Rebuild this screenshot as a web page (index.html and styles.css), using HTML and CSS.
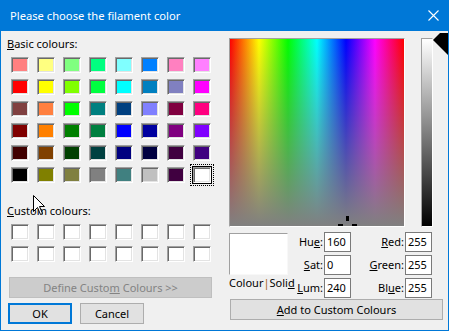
FILE: index.html
```html
<!DOCTYPE html>
<html>
<head>
<meta charset="utf-8">
<link rel="stylesheet" href="styles.css">
</head>
<body>
<div class="window">
  <div class="titlebar">
    <span class="title">Please choose the filament color</span>
    <svg class="close" width="11" height="11" viewBox="0 0 11 11"><path d="M0.5 0.5 L10.5 10.5 M10.5 0.5 L0.5 10.5" stroke="#fff" stroke-width="1.1" fill="none"/></svg>
  </div>
  <div class="client">
    <div class="left">
      <div class="label basic-label"><u>B</u>asic colours:</div>
      <div class="swatches">
        <div class="sw" style="background:#ff8080"></div><div class="sw" style="background:#ffff80"></div><div class="sw" style="background:#80ff80"></div><div class="sw" style="background:#00ff80"></div><div class="sw" style="background:#80ffff"></div><div class="sw" style="background:#0080ff"></div><div class="sw" style="background:#ff80c0"></div><div class="sw" style="background:#ff80ff"></div>
        <div class="sw" style="background:#ff0000"></div><div class="sw" style="background:#ffff00"></div><div class="sw" style="background:#80ff00"></div><div class="sw" style="background:#00ff40"></div><div class="sw" style="background:#00ffff"></div><div class="sw" style="background:#0080c0"></div><div class="sw" style="background:#8080c0"></div><div class="sw" style="background:#ff00ff"></div>
        <div class="sw" style="background:#804040"></div><div class="sw" style="background:#ff8040"></div><div class="sw" style="background:#00ff00"></div><div class="sw" style="background:#008080"></div><div class="sw" style="background:#004080"></div><div class="sw" style="background:#8080ff"></div><div class="sw" style="background:#800040"></div><div class="sw" style="background:#ff0080"></div>
        <div class="sw" style="background:#800000"></div><div class="sw" style="background:#ff8000"></div><div class="sw" style="background:#008000"></div><div class="sw" style="background:#008040"></div><div class="sw" style="background:#0000ff"></div><div class="sw" style="background:#0000a0"></div><div class="sw" style="background:#800080"></div><div class="sw" style="background:#8000ff"></div>
        <div class="sw" style="background:#400000"></div><div class="sw" style="background:#804000"></div><div class="sw" style="background:#004000"></div><div class="sw" style="background:#004040"></div><div class="sw" style="background:#000080"></div><div class="sw" style="background:#000040"></div><div class="sw" style="background:#400040"></div><div class="sw" style="background:#400080"></div>
        <div class="sw" style="background:#000000"></div><div class="sw" style="background:#808000"></div><div class="sw" style="background:#808040"></div><div class="sw" style="background:#808080"></div><div class="sw" style="background:#408080"></div><div class="sw" style="background:#c0c0c0"></div><div class="sw" style="background:#400040"></div><div class="sw selected" style="background:#ffffff"></div>
      </div>
      <div class="label custom-label"><u>C</u>ustom colours:</div>
      <div class="swatches custom">
        <div class="sw"></div><div class="sw"></div><div class="sw"></div><div class="sw"></div><div class="sw"></div><div class="sw"></div><div class="sw"></div><div class="sw"></div>
        <div class="sw"></div><div class="sw"></div><div class="sw"></div><div class="sw"></div><div class="sw"></div><div class="sw"></div><div class="sw"></div><div class="sw"></div>
      </div>
      <div class="btn define"><span>Define Custo<u>m</u> Colours &gt;&gt;</span></div>
      <div class="actions">
        <div class="btn default"><span>OK</span></div>
        <div class="btn"><span>Cancel</span></div>
      </div>
    </div>
    <div class="right">
      <div class="pickers">
        <div class="spectrum">
          <span class="cross cross-top"></span>
          <span class="cross cross-left"></span>
          <span class="cross cross-right"></span>
        </div>
        <div class="lum-wrap">
          <div class="lum"></div>
          <svg class="lum-arrow" width="16" height="24" viewBox="0 0 16 24"><polygon points="0,7 7,0 16,0 16,23" fill="#000"/></svg>
        </div>
      </div>
      <div class="fields">
        <div class="preview"></div>
        <div class="flabel r1"><span>Hu<u>e</u>:</span></div>
        <div class="field r1">160</div>
        <div class="flabel r1"><span><u>R</u>ed:</span></div>
        <div class="field r1">255</div>
        <div class="flabel r2"><span><u>S</u>at:</span></div>
        <div class="field r2">0</div>
        <div class="flabel r2"><span><u>G</u>reen:</span></div>
        <div class="field r2">255</div>
        <div class="solid">Colour<span class="sep">|</span>Soli<u>d</u></div>
        <div class="flabel r3"><span><u>L</u>um:</span></div>
        <div class="field r3">240</div>
        <div class="flabel r3"><span>Bl<u>u</u>e:</span></div>
        <div class="field r3">255</div>
      </div>
      <div class="btn add"><span><u>A</u>dd to Custom Colours</span></div>
    </div>
  </div>
  <svg class="pointer" width="13" height="21" viewBox="0 0 13 21"><path d="M0.5 0.5 L0.5 16.5 L4.5 12.5 L7.5 19.5 L9.5 18.5 L6.5 11.5 L11.5 11.5 Z" fill="#fff" stroke="#000" stroke-width="1" stroke-linejoin="miter"/></svg>
</div>
</body>
</html>
```

FILE: styles.css
```css
html, body {
  margin: 0;
  padding: 0;
  background: #f0f0f0;
}

body {
  font-family: "Segoe UI", "Noto Sans", "Open Sans", sans-serif;
  font-size: 11px;
  color: #000;
}

u {
  text-decoration: underline;
  text-underline-offset: 1px;
}

.window {
  position: relative;
  width: 449px;
  height: 331px;
  box-sizing: border-box;
  border: 1px solid #0078d7;
  border-top: 0;
  background: #f0f0f0;
  overflow: hidden;
}

.titlebar {
  height: 31px;
  background: #0078d7;
  display: flex;
  align-items: center;
  padding-left: 9px;
}

.title {
  color: #fff;
  font-size: 11.2px;
  line-height: 31px;
}

.close {
  margin-left: auto;
  margin-right: 9px;
}

.client {
  display: flex;
  height: 299px;
}

.left {
  width: 228px;
  box-sizing: border-box;
  padding-left: 6px;
  display: flex;
  flex-direction: column;
  align-items: flex-start;
}

.label {
  line-height: 16px;
  height: 16px;
}

.basic-label {
  margin-top: 5px;
}

.custom-label {
  margin-top: 20px;
}

.swatches {
  display: grid;
  grid-template-columns: repeat(8, 18px);
  grid-auto-rows: 16px;
  column-gap: 8px;
  row-gap: 6px;
  margin-top: 5px;
  margin-left: 4px;
}

.sw {
  box-sizing: border-box;
  width: 18px;
  height: 16px;
  background: #fff;
  border: 1px solid;
  border-color: #a0a0a0 #ffffff #ffffff #a0a0a0;
  box-shadow: inset 1px 1px 0 #696969, inset -1px -1px 0 #e3e3e3;
}

.sw.selected {
  box-shadow: 0 0 0 1px #000, inset 1px 1px 0 #696969, inset -1px -1px 0 #e3e3e3;
  outline: 1px dotted #000;
  outline-offset: 2px;
}

.btn {
  box-sizing: border-box;
  height: 21px;
  border: 1px solid #adadad;
  background: #e1e1e1;
  display: flex;
  align-items: center;
  justify-content: center;
  line-height: 16px;
  white-space: nowrap;
}

.define {
  width: 203px;
  margin-top: 15px;
  margin-left: 2px;
  background: #cccccc;
  border-color: #bfbfbf;
  color: #838383;
}

.actions {
  display: flex;
  gap: 8px;
  margin-top: 5px;
  margin-left: 1px;
}

.actions .btn {
  width: 64px;
}

.btn.default {
  border: 2px solid #0078d7;
}

.right {
  flex: 1;
  display: flex;
  flex-direction: column;
  align-items: flex-start;
}

.pickers {
  display: flex;
  padding-top: 7px;
  gap: 16px;
}

.spectrum {
  position: relative;
  box-sizing: border-box;
  width: 176px;
  height: 189px;
  border: 1px solid;
  border-color: #a0a0a0 #ffffff #ffffff #a0a0a0;
  background:
    linear-gradient(to bottom, rgba(128,128,128,0), #808080),
    linear-gradient(to right, #ff0000, #ffff00, #00ff00, #00ffff, #0000ff, #ff00ff, #ff0000);
}

.cross {
  position: absolute;
  background: #000;
}

.cross-top {
  left: 116px;
  top: 177px;
  width: 3px;
  height: 5px;
}

.cross-left {
  left: 108px;
  top: 185px;
  width: 5px;
  height: 2px;
}

.cross-right {
  left: 122px;
  top: 185px;
  width: 5px;
  height: 2px;
}

.lum-wrap {
  position: relative;
}

.lum {
  box-sizing: border-box;
  width: 12px;
  height: 189px;
  border: 1px solid;
  border-color: #a0a0a0 #ffffff #ffffff #a0a0a0;
  background: linear-gradient(to bottom, #ffffff, #000000);
}

.lum-arrow {
  position: absolute;
  left: 12px;
  top: -5px;
}

.fields {
  display: grid;
  grid-template-columns: 60px 35px 27px 54px 27px;
  grid-template-rows: 20px 20px 20px;
  row-gap: 3px;
  margin-top: 5px;
}

.preview {
  grid-column: 1;
  grid-row: 1 / 3;
  box-sizing: border-box;
  width: 59px;
  height: 42px;
  margin-top: 1px;
  background: #fff;
  border: 1px solid;
  border-color: #a0a0a0 #f8f8f8 #f8f8f8 #a0a0a0;
}

.solid {
  grid-column: 1;
  grid-row: 3;
  line-height: 16px;
  margin-top: -3px;
  white-space: nowrap;
}

.sep {
  color: #a8641e;
}

.r1 { grid-row: 1; }
.r2 { grid-row: 2; }
.r3 { grid-row: 3; }

.flabel {
  text-align: right;
  line-height: 20px;
  padding-right: 1px;
  white-space: nowrap;
}

.field {
  box-sizing: border-box;
  border: 1px solid #7a7a7a;
  background: #fff;
  line-height: 18px;
  padding-left: 2px;
}

.add {
  width: 213px;
  margin-top: 1px;
  margin-left: 1px;
}

.pointer {
  position: absolute;
  left: 32px;
  top: 195px;
}
```
